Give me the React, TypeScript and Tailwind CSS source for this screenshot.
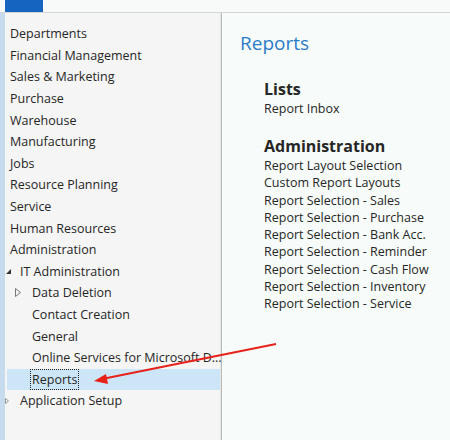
const navItems: { label: string; indent: number; icon?: 'open' | 'closed' | 'small'; selected?: boolean }[] = [
  { label: 'Departments', indent: 0 },
  { label: 'Financial Management', indent: 0 },
  { label: 'Sales & Marketing', indent: 0 },
  { label: 'Purchase', indent: 0 },
  { label: 'Warehouse', indent: 0 },
  { label: 'Manufacturing', indent: 0 },
  { label: 'Jobs', indent: 0 },
  { label: 'Resource Planning', indent: 0 },
  { label: 'Service', indent: 0 },
  { label: 'Human Resources', indent: 0 },
  { label: 'Administration', indent: 0 },
  { label: 'IT Administration', indent: 1, icon: 'open' },
  { label: 'Data Deletion', indent: 2, icon: 'closed' },
  { label: 'Contact Creation', indent: 2 },
  { label: 'General', indent: 2 },
  { label: 'Online Services for Microsoft D...', indent: 2 },
  { label: 'Reports', indent: 2, selected: true },
  { label: 'Application Setup', indent: 1, icon: 'small' },
];

const adminLinks = [
  'Report Layout Selection',
  'Custom Report Layouts',
  'Report Selection - Sales',
  'Report Selection - Purchase',
  'Report Selection - Bank Acc.',
  'Report Selection - Reminder',
  'Report Selection - Cash Flow',
  'Report Selection - Inventory',
  'Report Selection - Service',
];

const font = "font-['Open_Sans','Noto_Sans',sans-serif]";

function NavRow({ item }: { item: (typeof navItems)[number] }) {
  const pad = item.indent === 0 ? 'pl-[5px]' : item.indent === 1 ? 'pl-[15px]' : 'pl-[27px]';
  return (
    <div className={`relative flex h-[21.6px] items-center ${pad} ${item.selected ? 'ml-[2px] bg-[#cde6f7]' : ''}`}>
      {item.icon === 'open' && (
        <svg className="absolute left-[1px] top-[8px]" width="6" height="6" viewBox="0 0 6 6">
          <polygon points="5,0 5,5 0,5" fill="#333" />
        </svg>
      )}
      {item.icon === 'closed' && (
        <svg className="absolute left-[10px] top-[6px]" width="6" height="9" viewBox="0 0 6 9">
          <polygon points="0.5,0.5 5.5,4.5 0.5,8.5" fill="none" stroke="#777" strokeWidth="1" />
        </svg>
      )}
      {item.icon === 'small' && (
        <svg className="absolute left-[0px] top-[8px]" width="4" height="6" viewBox="0 0 4 6">
          <polygon points="0.5,0.5 3.5,3 0.5,5.5" fill="none" stroke="#999" strokeWidth="1" />
        </svg>
      )}
      <span
        className={`${item.selected ? 'ml-[-4px] border border-dotted border-[#222] px-[1px]' : ''} whitespace-nowrap text-[12.5px] leading-[19px] text-[#262626]`}
      >
        {item.label}
      </span>
    </div>
  );
}

export default function App() {
  return (
    <div className={`relative flex h-[440px] w-[450px] flex-col overflow-hidden bg-[#f7fbf9] ${font}`}>
      {/* top strip */}
      <div className="flex h-[13px] shrink-0 border-b border-[#d4d6d5] bg-[#f7faf8]">
        <div className="ml-[5px] h-[12px] w-[38px] bg-[#1565c0]" />
      </div>

      <div className="flex flex-1">
        <div className="w-[5px] bg-[#c7dbef]" />
        <div className="w-[215px] bg-[#f5f5f5] pt-[10px]">
          {navItems.map((item) => (
            <NavRow key={item.label} item={item} />
          ))}
        </div>
        <div className="w-[1px] bg-[#e6e6e6]" />
        <div className="w-[1px] bg-[#b9b9b9]" />

        <div className="flex-1 bg-[#f7fcfa] pl-[18px] pt-[17px]">
          <div className="text-[19px] leading-[26px] text-[#2a7bc9]">Reports</div>
          <div className="pl-[24px] pt-[22px] text-[#262626]">
            <div className="text-[16px] font-bold leading-[22px]">Lists</div>
            <div className="text-[12.5px] leading-[17px]">Report Inbox</div>
            <div className="pt-[19px] text-[16px] font-bold leading-[21px]">Administration</div>
            {adminLinks.map((l) => (
              <div key={l} className="text-[12.5px] leading-[17.3px]">
                {l}
              </div>
            ))}
          </div>
        </div>
      </div>

      {/* red arrow */}
      <svg className="pointer-events-none absolute left-0 top-0" width="450" height="440" viewBox="0 0 450 440">
        <line x1="276" y1="344" x2="102" y2="379" stroke="#e8211b" strokeWidth="2" />
        <polygon points="94,381 106,374 108,384" fill="#e8211b" />
      </svg>
    </div>
  );
}
